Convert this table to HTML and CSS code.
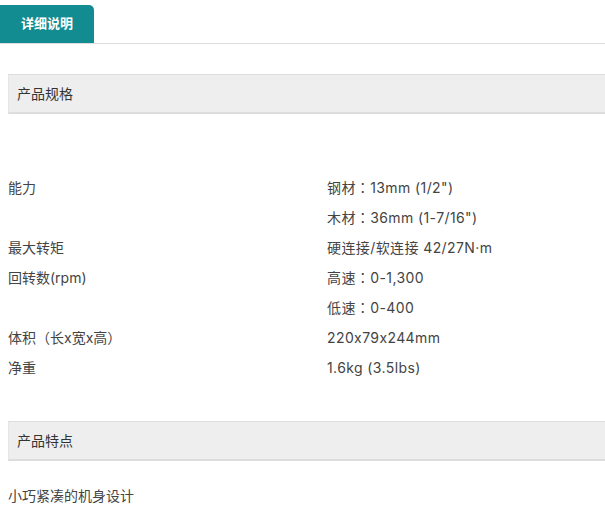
FILE: index.html
```html
<!DOCTYPE html>
<html lang="zh-CN">
<head>
  <meta charset="UTF-8">
  <meta name="viewport" content="width=device-width, initial-scale=1.0">
  <title>详细说明</title>
  <link rel="stylesheet" href="styles.css">
</head>
<body>

  <div class="tabs">
    <span class="tab active">详细说明</span>
  </div>

  <div class="detail">
    <h3 class="section-title first">产品规格</h3>

    <div class="spec-list">
      <div class="spec-name">能力</div>
      <div class="spec-value">钢材<span class="punct" lang="zh-Hant">：</span>13mm (1/2")<br>木材<span class="punct" lang="zh-Hant">：</span>36mm (1-7/16")</div>

      <div class="spec-name">最大转矩</div>
      <div class="spec-value">硬连接/软连接 42/27N·m</div>

      <div class="spec-name">回转数(rpm)</div>
      <div class="spec-value">高速<span class="punct" lang="zh-Hant">：</span>0-1,300<br>低速<span class="punct" lang="zh-Hant">：</span>0-400</div>

      <div class="spec-name">体积<span class="punct" lang="zh-Hant">（</span>长x宽x高<span class="punct" lang="zh-Hant">）</span></div>
      <div class="spec-value">220x79x244mm</div>

      <div class="spec-name">净重</div>
      <div class="spec-value">1.6kg (3.5lbs)</div>
    </div>

    <h3 class="section-title">产品特点</h3>

    <p class="feature">小巧紧凑的机身设计</p>
  </div>

</body>
</html>
```

FILE: styles.css
```css
body {
  margin: 0;
  font-family: "Inter", "Noto Sans CJK SC", sans-serif;
  font-feature-settings: "calt" 0;
  font-size: 14px;
  color: #444;
  background: #fff;
}
/* centred full-width punctuation, as on the original site */
.punct {
  font-family: "Noto Sans CJK TC", sans-serif;
  line-height: 1;
}
.tabs {
  padding-top: 5px;
  border-bottom: 1px solid #ddd;
  height: 38px;
}
.tab {
  display: inline-block;
  width: 94px;
  height: 38px;
  line-height: 36px;
  text-align: center;
  font-size: 13px;
  font-weight: bold;
  color: #fff;
  background-color: #138c91;
  border-radius: 0 5px 0 0;
}
.detail {
  padding-left: 8px;
}
.section-title {
  margin: 38px 0 0;
  height: 37px;
  line-height: 37px;
  padding-left: 8px;
  font-size: 14px;
  font-weight: normal;
  color: #333;
  background-color: #eee;
  border-top: 1px solid #ddd;
  border-left: 1px solid #e6e6e6;
  border-bottom: 2px solid #ddd;
}
.section-title.first {
  margin-top: 30px;
}
.spec-list {
  display: grid;
  grid-template-columns: 319px 1fr;
  margin-top: 59px;
  line-height: 30px;
}
.spec-value {
  letter-spacing: 0.4px;
}
.feature {
  margin: 20px 0 0;
  line-height: 30px;
}
```
